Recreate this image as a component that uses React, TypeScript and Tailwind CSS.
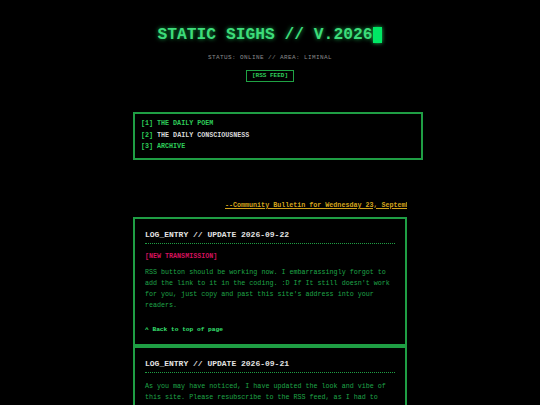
import React from "react";

const mono = { fontFamily: '"Liberation Mono", "Courier New", monospace' };

const entries = [
  {
    date: "2026-09-22",
    tag: "[NEW TRANSMISSION]",
    body: [
      "RSS button should be working now. I embarrassingly forgot to",
      "add the link to it in the coding. :D If It still doesn't work",
      "for you, just copy and past this site's address into your",
      "readers.",
    ],
  },
  {
    date: "2026-09-21",
    tag: null,
    body: [
      "As you may have noticed, I have updated the look and vibe of",
      "this site. Please resubscribe to the RSS feed, as I had to",
      "change things a little and rebuild the engine to make it",
      "work properly again.",
    ],
  },
];

function LogEntry({ entry }: { entry: (typeof entries)[number] }) {
  return (
    <div className="border-2 border-[#1f9e44] px-[10px] pt-[11px] pb-[10px]">
      <h2 className="border-b border-dotted border-[#1f9e44] pb-[3px] text-[8px] leading-[10px] font-bold text-[#e2e2e2]">
        LOG_ENTRY // UPDATE {entry.date}
      </h2>
      {entry.tag && (
        <p className="mt-[8px] text-[6.7px] leading-[8px] font-bold text-[#d3125c]">{entry.tag}</p>
      )}
      <div className={entry.tag ? "mt-[7.5px]" : "mt-[8px]"}>
        {entry.body.map((line) => (
          <p key={line} className="text-[6.7px] leading-[11px] text-[#1fa548] whitespace-nowrap">
            {line}
          </p>
        ))}
      </div>
      <a className="mt-[14.5px] block text-[6.2px] leading-[8px] font-bold text-[#36e070]">
        ^ Back to top of page
      </a>
    </div>
  );
}

export default function App() {
  return (
    <div className="min-h-screen bg-black overflow-hidden" style={mono}>
      <div className="mx-auto w-[274px] pt-[27px]">
        {/* header */}
        <h1 className="flex items-center justify-center text-[16.3px] leading-[16px] font-bold text-[#3ddc7a] [text-shadow:0_0_4px_#16a34a]">
          STATIC SIGHS // V.2026
          <span className="ml-[1px] inline-block h-[16px] w-[9px] bg-[#00e865] shadow-[0_0_4px_#22c55e]" />
        </h1>
        <p className="mt-[12px] text-center text-[6px] leading-[6px] tracking-[0.4px] text-[#8a8a8a] whitespace-nowrap">
          STATUS: ONLINE // AREA: LIMINAL
        </p>
        <div className="mt-[9px] flex justify-center">
          <a className="border border-[#1fa244] px-[5px] text-[6px] leading-[10px] font-bold text-[#2ecc5a]">
            [RSS FEED]
          </a>
        </div>

        {/* nav */}
        <nav className="mt-[30px] w-[290px] border-2 border-[#1f9e44] px-[6px] pt-[4px] pb-[5px] text-[6.7px] leading-[11.5px] font-bold">
          <p className="text-[#2ecc5a]">[1] THE DAILY POEM</p>
          <p className="text-[#d8d8d8]">
            <span className="text-[#2ecc5a]">[2]</span> THE DAILY CONSCIOUSNESS
          </p>
          <p className="text-[#2ecc5a]">[3] ARCHIVE</p>
        </nav>

        {/* bulletin */}
        <div className="mt-[41px] flex justify-end">
          <div className="w-[182px] overflow-hidden whitespace-nowrap text-[6.7px] leading-[8px] font-bold text-[#d4a41c] underline">
            --Community Bulletin for Wednesday 23, September 2026--
          </div>
        </div>

        {/* log */}
        <div className="mt-[8px]">
          {entries.map((e) => (
            <LogEntry key={e.date} entry={e} />
          ))}
        </div>
      </div>
    </div>
  );
}
